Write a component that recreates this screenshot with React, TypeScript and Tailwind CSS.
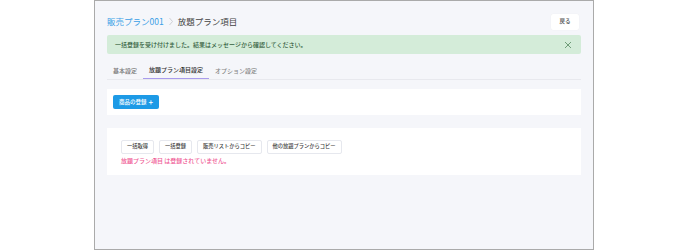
import React from "react";

const jp = { fontFamily: '"Noto Sans CJK JP", "Noto Sans", sans-serif' };

export default function App() {
  return (
    <div className="w-[688px] h-[251px] bg-white flex justify-center" style={jp}>
      <div className="w-[500px] h-[250px] border-[1.5px] border-[#aaaaaa] bg-[#f5f6fa] px-[12px] pt-[12px] flex flex-col">
        <div className="flex items-center justify-between h-[17px]">
          <div className="flex items-center text-[8.5px] leading-none">
            <span className="text-[#3b9fe6]">販売プラン001</span>
            <svg width="8" height="9" viewBox="0 0 8 9" className="mx-[3px]">
              <path d="M2.5 1 L5.5 4.5 L2.5 8" fill="none" stroke="#c5c7cc" strokeWidth="0.8" />
            </svg>
            <span className="text-[#444]">放題プラン項目</span>
          </div>
          <button className="bg-white rounded-[2px] w-[28px] h-[16px] text-[5.5px] font-medium text-[#555] mr-[2px] shadow-[0_0_1px_rgba(0,0,0,0.08)]">戻る</button>
        </div>
        <div className="mt-[5px] h-[19px] bg-[#d4ecd9] rounded-[2px] flex items-center justify-between pl-[8px] pr-[9px]">
          <span className="text-[6px] font-medium text-[#355f3f]">一括登録を受け付けました。結果はメッセージから確認してください。</span>
          <svg width="8" height="8" viewBox="0 0 8 8">
            <path d="M1 1 L7 7 M7 1 L1 7" stroke="#6f9c78" strokeWidth="1" />
          </svg>
        </div>
        <div className="mt-[7px] flex border-b border-[#e8e9ee] h-[19px] text-[6px] font-medium">
          <div className="px-[6px] flex items-center text-[#777]">基本設定</div>
          <div className="px-[6px] flex items-center text-[#333] border-b-[1.5px] border-[#a99cec]">放題プラン項目設定</div>
          <div className="px-[6px] flex items-center text-[#888]">オプション設定</div>
        </div>
        <div className="mt-[9px] bg-white h-[26px] flex items-center px-[6px]">
          <button className="bg-[#1d9ae6] text-white font-medium rounded-[2px] h-[14px] w-[46px] text-[5.5px] flex items-center justify-center gap-[2px]">
            商品の登録
            <span className="text-[8px] leading-none">+</span>
          </button>
        </div>
        <div className="mt-[13px] bg-white h-[47px] px-[14px] pt-[12px]">
          <div className="flex gap-[5px] text-[5.25px] font-medium text-[#444]">
            <button className="h-[14px] px-[5px] border border-[#e6e8ee] rounded-[2px] bg-white">一括取得</button>
            <button className="h-[14px] px-[5px] border border-[#e6e8ee] rounded-[2px] bg-white">一括登録</button>
            <button className="h-[14px] px-[5px] border border-[#e6e8ee] rounded-[2px] bg-white">販売リストからコピー</button>
            <button className="h-[14px] px-[5px] border border-[#e6e8ee] rounded-[2px] bg-white">他の放題プランからコピー</button>
          </div>
          <div className="mt-[2px] text-[6px] font-medium text-[#ef5c96]">放題プラン項目 は登録されていません。</div>
        </div>
      </div>
    </div>
  );
}
